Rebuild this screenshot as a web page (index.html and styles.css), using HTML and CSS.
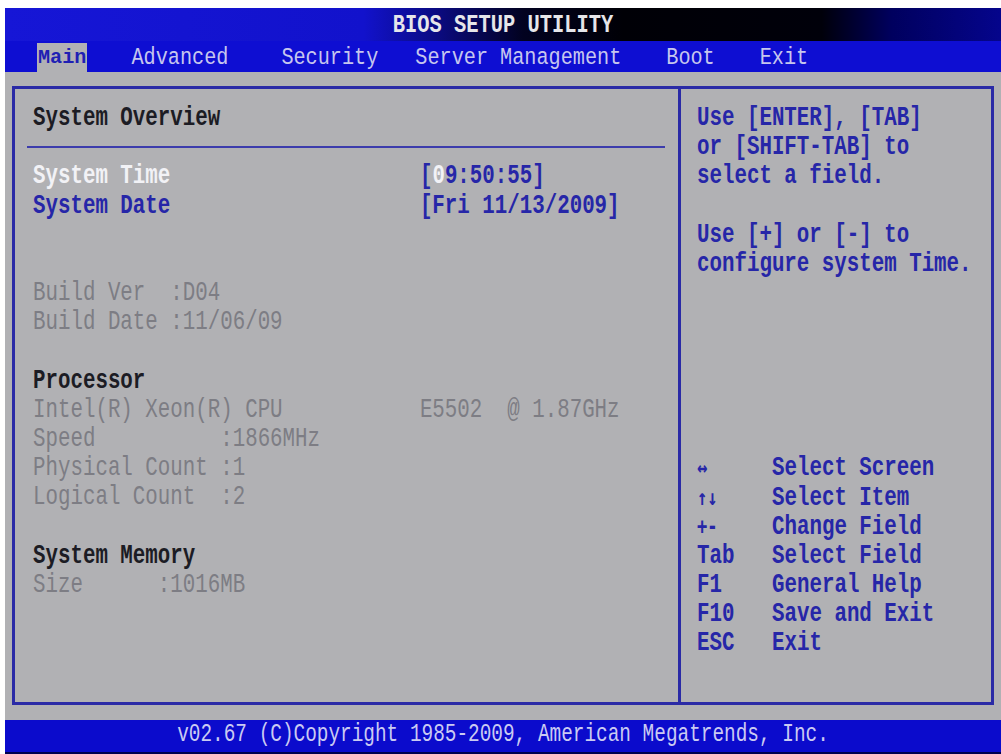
FILE: index.html
```html
<!DOCTYPE html>
<html>
<head>
    <title>BIOS Setup Utility</title>
    <link rel="stylesheet" href="styles.css">
</head>
<body>
    <div class="screen">
        <div class="titlebar"><span class="line">BIOS SETUP UTILITY</span></div>

        <div class="menubar">
            <span class="tab active">Main</span>
            <span class="tab">Advanced</span>
            <span class="tab security">Security</span>
            <span class="tab server">Server Management</span>
            <span class="tab">Boot</span>
            <span class="tab">Exit</span>
        </div>

        <div class="frame">
            <div class="panel">
                <div class="info">
                    <div class="line dark">System Overview</div>
                    <div class="rule"></div>
                    <div class="line"><span class="white">System Time</span><span class="blue">                    [<span class="white">0</span>9:50:55]</span></div>
                    <div class="line blue">System Date                    [Fri 11/13/2009]</div>
                    <div class="line"></div>
                    <div class="line"></div>
                    <div class="line grey">Build Ver  :D04</div>
                    <div class="line grey">Build Date :11/06/09</div>
                    <div class="line"></div>
                    <div class="line dark">Processor</div>
                    <div class="line grey">Intel(R) Xeon(R) CPU           E5502  @ 1.87GHz</div>
                    <div class="line grey">Speed          :1866MHz</div>
                    <div class="line grey">Physical Count :1</div>
                    <div class="line grey">Logical Count  :2</div>
                    <div class="line"></div>
                    <div class="line dark">System Memory</div>
                    <div class="line grey">Size      :1016MB</div>
                </div>

                <div class="help">
                    <div class="line">Use [ENTER], [TAB]</div>
                    <div class="line">or [SHIFT-TAB] to</div>
                    <div class="line">select a field.</div>
                    <div class="line"></div>
                    <div class="line">Use [+] or [-] to</div>
                    <div class="line">configure system Time.</div>

                    <div class="legend">
                        <div class="line"><span class="key arrows">&#8596;</span>Select Screen</div>
                        <div class="line"><span class="key arrows">&#8593;&#8595;</span>Select Item</div>
                        <div class="line"><span class="key arrows">+-</span>Change Field</div>
                        <div class="line"><span class="key">Tab</span>Select Field</div>
                        <div class="line"><span class="key">F1</span>General Help</div>
                        <div class="line"><span class="key">F10</span>Save and Exit</div>
                        <div class="line"><span class="key">ESC</span>Exit</div>
                    </div>
                </div>
            </div>
        </div>

        <div class="statusbar"><span class="line">v02.67 (C)Copyright 1985-2009, American Megatrends, Inc.</span></div>
    </div>
</body>
</html>
```

FILE: styles.css
```css
body {
    margin: 0;
    background-color: #ffffff;
    font-family: "Liberation Mono", "DejaVu Sans Mono", monospace;
    font-size: 20.8px;
    font-weight: bold;
}
.screen {
    margin: 8px 0 0 5px;
    width: 996px;
    height: 746px;
    background-color: #b1b1b4;
    display: flex;
    flex-direction: column;
}
/* text-mode glyphs are taller than they are wide */
.line {
    display: block;
    height: 29.2px;
    line-height: 29.2px;
    white-space: pre;
    transform: scaleY(1.3);
}
.titlebar {
    height: 33px;
    display: flex;
    align-items: center;
    justify-content: center;
    color: #e6e6ea;
    font-size: 20.4px;
    background: linear-gradient(to right, #1616d6 0%, #1212cc 36%, #0a0a7a 44%, #020220 52%, #000006 62%, #00000a 82%, #00005e 89%, #05058c 100%);
}
.menubar {
    height: 31px;
    display: flex;
    align-items: flex-end;
    gap: 43px;
    padding-left: 32px;
    background-color: #0e0ed2;
    color: #c6c6ee;
    font-weight: normal;
    font-size: 20.2px;
}
.tab {
    height: 29px;
    line-height: 29px;
    padding: 0 1px;
    transform: scaleY(1.2);
}
.tab.security {
    margin-left: 8px;
}
.tab.server {
    margin-left: -8px;
}
.tab.active {
    background-color: #b1b1b4;
    color: #1f1fb4;
    font-weight: bold;
    transform: none;
}
.frame {
    height: 648px;
    padding: 14px 7px 15px 7px;
    box-sizing: border-box;
}
.panel {
    height: 100%;
    box-sizing: border-box;
    border: 3px solid #2a2aa6;
    display: grid;
    grid-template-columns: 666px 307px;
}
.info {
    padding: 14px 0 0 18px;
    border-right: 3px solid #2a2aa6;
}
.help {
    padding: 14px 0 0 16px;
    color: #2626a8;
}
.rule {
    height: 2px;
    width: 638px;
    margin: 13.6px 0 13.6px -6px;
    background-color: #3c3cac;
}
.legend {
    margin-top: 175.2px;
}
.key {
    display: inline-block;
    width: 75px;
}
.arrows {
    font-size: 17px;
    font-family: "DejaVu Sans Mono", monospace;
}
.blue {
    color: #2626a8;
}
.dark {
    color: #1c1c24;
}
.grey {
    color: #7d7d84;
    font-weight: normal;
}
.white {
    color: #f2f2f6;
}
.statusbar {
    height: 34px;
    box-sizing: border-box;
    border-bottom: 2px solid #000050;
    background-color: #0b0bcc;
    color: #cacaf2;
    font-size: 19.4px;
    font-weight: normal;
    display: flex;
    align-items: center;
    justify-content: center;
}
```
